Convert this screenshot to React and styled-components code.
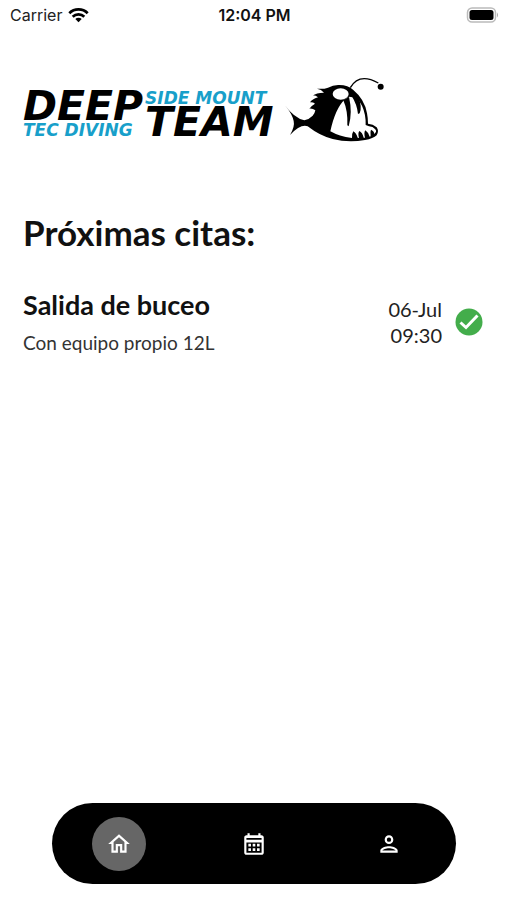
import React from "react";
import styled, { createGlobalStyle } from "styled-components";

const GlobalStyle = createGlobalStyle`
  * { box-sizing: border-box; }
  body { margin: 0; background: #fff; color: #111; font-family: Lato, sans-serif; }
  h1, h2, p { margin: 0; }
`;

const Screen = styled.div`
  min-height: 100vh;
  display: flex;
  flex-direction: column;
`;

const StatusBar = styled.header`
  display: grid;
  grid-template-columns: 1fr auto 1fr;
  align-items: center;
  height: 30px;
  padding: 0 8px 0 10px;
  font: 400 16px/20px Inter, sans-serif;
  color: #222;
`;

const Carrier = styled.div`
  display: flex;
  align-items: center;
  gap: 6px;
`;

const Clock = styled.time`
  font-weight: 600;
  color: #111;
`;

const Battery = styled.svg`
  justify-self: end;
`;

const Brand = styled.div`
  display: flex;
  align-items: flex-start;
  gap: 2px;
  padding: 46px 23px 0;
`;

const WordColumn = styled.div`
  display: flex;
  flex-direction: column;
  padding-top: 14px;
  white-space: nowrap;
`;

const BigWord = styled.span`
  font: italic 700 41px/32px "DejaVu Sans", sans-serif;
  color: #000;
`;

const SmallWord = styled.span`
  font: italic 700 17px/16px "DejaVu Sans", sans-serif;
  color: #189fca;
`;

const Fish = styled.svg`
  flex: none;
  margin-left: 9px;
`;

const Content = styled.main`
  flex: 1;
  padding: 67px 24px 0 23px;
`;

const Title = styled.h1`
  font-size: 35px;
  line-height: 42px;
  font-weight: 700;
`;

const Appointment = styled.article`
  display: flex;
  align-items: center;
  margin-top: 35px;
`;

const Details = styled.div`
  flex: 1;
`;

const Name = styled.h2`
  font-size: 27px;
  line-height: 34px;
  font-weight: 700;
`;

const Note = styled.p`
  margin-top: 8px;
  font-size: 19px;
  line-height: 26px;
  color: #333;
`;

const When = styled.time`
  display: flex;
  flex-direction: column;
  align-items: flex-end;
  margin-right: 13px;
  font-size: 20px;
  line-height: 26px;
  color: #222;
`;

const TabBar = styled.nav`
  display: flex;
  justify-content: space-around;
  align-items: center;
  height: 81px;
  margin: 0 51px 16px 52px;
  border-radius: 41px;
  background: #000;
`;

const Tab = styled.button`
  display: grid;
  place-items: center;
  width: 54px;
  height: 54px;
  padding: 0;
  border: 0;
  border-radius: 50%;
  background: ${(p) => (p.$active ? "#666" : "transparent")};
  color: #fff;
  cursor: pointer;
`;

const tabs = [
  { label: "Inicio", d: "M12 5.69l5 4.5V18h-2v-6H9v6H7v-7.81l5-4.5M12 3L2 12h3v8h6v-6h2v6h6v-8h3L12 3z" },
  { label: "Calendario", d: "M19 4h-1V2h-2v2H8V2H6v2H5c-1.1 0-2 .9-2 2v14c0 1.1.9 2 2 2h14c1.1 0 2-.9 2-2V6c0-1.1-.9-2-2-2zm0 16H5V10.500h14V20zm0-12H5V6.500h14V8zM9.200 14.200H6.800v-2.400h2.400v2.400zm4 0h-2.400v-2.400h2.400v2.400zm4 0h-2.400v-2.400h2.400v2.400zm-8 4.200H6.800V16h2.400v2.400zm4 0h-2.400V16h2.400v2.400zm4 0h-2.400V16h2.400v2.400z" },
  { label: "Perfil", d: "M12 6a2 2 0 1 1 0 4 2 2 0 0 1 0-4m0 10c2.700 0 5.800 1.290 6 2H6c.23-.72 3.310-2 6-2m0-12C9.790 4 8 5.790 8 8s1.790 4 4 4 4-1.790 4-4-1.790-4-4-4zm0 10c-2.670 0-8 1.340-8 4v2h16v-2c0-2.660-5.330-4-8-4z" },
];

export default function App() {
  const [active, setActive] = React.useState(0);
  return (
    <Screen>
      <GlobalStyle />
      <StatusBar>
        <Carrier>
          Carrier
          <svg width="21" height="16" viewBox="0 0 21 16" aria-hidden="true">
            <g fill="none" stroke="#000" strokeWidth="2.700">
              <path d="M1.300 6.200a13 13 0 0 1 18.400 0" />
              <path d="M4.700 9.700a8.200 8.200 0 0 1 11.600 0" />
            </g>
            <path d="M10.500 15.300 7.300 12.100a4.500 4.500 0 0 1 6.400 0z" />
          </svg>
        </Carrier>
        <Clock>12:04 PM</Clock>
        <Battery width="33" height="16" viewBox="0 0 33 16" aria-label="Batería" role="img">
          <rect x="1.500" y="1" width="28" height="14" rx="4.500" fill="#fff" stroke="#bbb" strokeWidth="1.500" />
          <rect x="3.500" y="3" width="24" height="10" rx="2.500" />
          <path d="M31 5.500q2 2.500 0 5z" fill="#aaa" />
        </Battery>
      </StatusBar>

      <Brand>
        <WordColumn>
          <BigWord>DEEP</BigWord>
          <SmallWord>TEC DIVING</SmallWord>
        </WordColumn>
        <WordColumn>
          <SmallWord>SIDE MOUNT</SmallWord>
          <BigWord>TEAM</BigWord>
        </WordColumn>
        <Fish width="100" height="68" viewBox="15 18 300 204" role="img" aria-label="Pez abisal">
          <path d="M16 107Q42 143 73 151Q86 149 98 137Q105 129 106 121Q98 115 88 116Q93 108 105 101Q99 96 90 97Q96 88 114 82Q108 76 99 76Q108 69 132 68Q124 58 111 56Q130 58 144 53Q160 44 178 45Q204 45 220 60Q254 88 261 130Q264 145 264 161Q279 162 290 172Q298 183 290 196Q280 206 255 210Q205 219 158 207Q120 198 83 169Q62 161 30 195Q45 170 41 153Q37 132 16 107Z" />
          <ellipse cx="182" cy="72" rx="24" ry="17" fill="#fff" />
          <path d="M195 88Q166 115 151 184Q177 199 216 204Q215 191 220 184Q228 188 233 203L237 204Q233 189 238 183Q247 187 251 203L255 203Q251 188 256 181Q266 188 269 200L272 199Q270 185 273 179Q284 184 282 192Q293 185 285 177Q279 170 267 169L257 165Q258 133 246 107Q239 92 229 83L207 80Z" fill="#fff" />
          <path d="M190 91Q204 123 202 166L206 169Q218 128 207 80Z" />
          <path d="M215 78Q231 103 234 132L239 130Q247 111 236 84L222 73Z" />
          <path d="M211 53Q237 7 295 39" fill="none" stroke="#000" strokeWidth="4" />
          <circle cx="302" cy="50" r="9" />
        </Fish>
      </Brand>

      <Content>
        <Title>Próximas citas:</Title>
        <Appointment>
          <Details>
            <Name>Salida de buceo</Name>
            <Note>Con equipo propio 12L</Note>
          </Details>
          <When>
            <span>06-Jul</span>
            <span>09:30</span>
          </When>
          <svg width="28" height="28" viewBox="0 0 28 28" role="img" aria-label="Confirmada">
            <circle cx="14" cy="14" r="13.500" fill="#43ad4b" />
            <path d="m5.500 14.500 5.500 5 11.500-12" fill="none" stroke="#fff" strokeWidth="3" />
          </svg>
        </Appointment>
      </Content>

      <TabBar aria-label="Principal">
        {tabs.map((tab, i) => (
          <Tab key={tab.label} type="button" aria-label={tab.label} $active={i === active} onClick={() => setActive(i)}>
            <svg width="26" height="26" viewBox="0 0 24 24" fill="currentColor" aria-hidden="true">
              <path d={tab.d} />
            </svg>
          </Tab>
        ))}
      </TabBar>
    </Screen>
  );
}
